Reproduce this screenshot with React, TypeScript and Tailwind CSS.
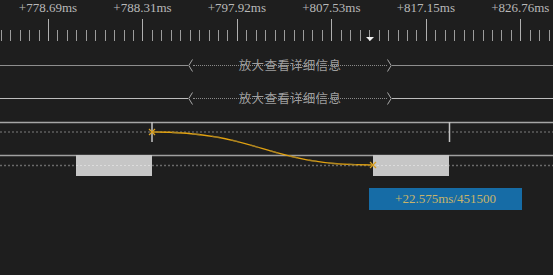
import React from "react";

const MAJOR0 = 48;
const STEP = 9.446;
const labels = ["+778.69ms", "+788.31ms", "+797.92ms", "+807.53ms", "+817.15ms", "+826.76ms"];

function Ruler() {
  const ticks: React.ReactNode[] = [];
  for (let i = -5; i <= 53; i++) {
    const x = Math.round(MAJOR0 + i * STEP) + 0.5;
    const major = ((i % 10) + 10) % 10 === 0;
    ticks.push(
      <line key={i} x1={x} x2={x} y1={major ? 19 : 30} y2={41} stroke={major ? "#b0b0b0" : "#9c9c9c"} strokeWidth={1} />
    );
  }
  return (
    <div className="relative h-[42px] w-full">
      <svg className="absolute inset-0" width={553} height={42}>
        {ticks}
        <polygon points="366,37 374,37 370,41" fill="#f2f2f2" />
      </svg>
      {labels.map((l, k) => (
        <span
          key={l}
          className="absolute top-[0px] -translate-x-1/2 whitespace-nowrap text-[13px] leading-[15px] text-[#b9b9b9]"
          style={{ left: MAJOR0 + k * 94.46 }}
        >
          {l}
        </span>
      ))}
    </div>
  );
}

function DetailRow({ line }: { line: string }) {
  return (
    <div className="flex h-[16px] items-center">
      <div className="h-px w-[188px]" style={{ background: line }} />
      <svg width={5} height={13} className="shrink-0">
        <polyline points="4.5,0.5 0.8,6.5 4.5,12.5" fill="none" stroke="#a8a8a8" strokeWidth={1} />
      </svg>
      <div className="relative flex h-full w-[194px] items-center justify-center">
        <div className="absolute left-0 right-0 top-1/2 border-t border-dotted border-[#8a8a8a]" />
        <span className="relative text-[12.5px] leading-[16px] tracking-[0.3px] text-[#9e9e9e]" style={{ fontFamily: '"Noto Sans CJK SC", sans-serif' }}>
          放大查看详细信息
        </span>
      </div>
      <svg width={5} height={13} className="shrink-0">
        <polyline points="0.5,0.5 4.2,6.5 0.5,12.5" fill="none" stroke="#a8a8a8" strokeWidth={1} />
      </svg>
      <div className="h-px flex-1" style={{ background: line }} />
    </div>
  );
}

function Tracks() {
  const o = 106;
  const y = (v: number) => v - o;
  return (
    <svg width={553} height={76} className="block">
      <line x1={0} x2={553} y1={y(122.5)} y2={y(122.5)} stroke="#a6a6a6" strokeWidth={1.5} />
      <line x1={0} x2={553} y1={y(132)} y2={y(132)} stroke="#5e5e5e" strokeWidth={1.5} strokeDasharray="2 2" />
      <line x1={152} x2={152} y1={y(122)} y2={y(142)} stroke="#c4c4c4" strokeWidth={1.5} />
      <line x1={449.5} x2={449.5} y1={y(122)} y2={y(142)} stroke="#c4c4c4" strokeWidth={1.5} />
      <line x1={0} x2={553} y1={y(155.5)} y2={y(155.5)} stroke="#a0a0a0" strokeWidth={1.5} />
      <line x1={0} x2={553} y1={y(165.5)} y2={y(165.5)} stroke="#6a6a6a" strokeWidth={1.5} strokeDasharray="2 2" />
      <rect x={76} y={y(155)} width={76} height={21} fill="#c6c6c6" />
      <rect x={373} y={y(155)} width={76} height={21} fill="#c6c6c6" />
      <line x1={76} x2={152} y1={y(165.5)} y2={y(165.5)} stroke="#dcdcdc" strokeWidth={1} strokeDasharray="2 2" />
      <line x1={373} x2={449} y1={y(165.5)} y2={y(165.5)} stroke="#dcdcdc" strokeWidth={1} strokeDasharray="2 2" />
      <path
        d={`M152 ${y(132)} C 262 ${y(132)}, 262 ${y(165)}, 373 ${y(165)}`}
        fill="none"
        stroke="#e2a210"
        strokeWidth={1.3}
      />
      <path
        d={`M152 ${y(132)} C 262 ${y(132)}, 262 ${y(165)}, 373 ${y(165)}`}
        fill="none"
        stroke="#9a7a2a"
        strokeWidth={1.6}
        strokeDasharray="8 12"
        opacity={0.7}
      />
      <g stroke="#d9a021" strokeWidth={1.2}>
        <line x1={149} x2={155} y1={y(129)} y2={y(135)} />
        <line x1={155} x2={149} y1={y(129)} y2={y(135)} />
        <line x1={370} x2={376} y1={y(162)} y2={y(168)} />
        <line x1={376} x2={370} y1={y(162)} y2={y(168)} />
      </g>
    </svg>
  );
}

export default function App() {
  return (
    <div
      className="h-[275px] w-[553px] overflow-hidden bg-[#1e1e1e]"
      style={{ fontFamily: '"Liberation Serif", "Noto Sans CJK SC", serif' }}
    >
      <Ruler />
      <div className="mt-[15px]">
        <DetailRow line="#8e8e8e" />
      </div>
      <div className="mt-[17px]">
        <DetailRow line="#bdbdbd" />
      </div>
      <Tracks />
      <div className="ml-[369px] mt-[6px] flex h-[22px] w-[153px] items-center justify-center bg-[#166ca6] text-[13px] text-[#c8b46a]">
        +22.575ms/451500
      </div>
    </div>
  );
}
